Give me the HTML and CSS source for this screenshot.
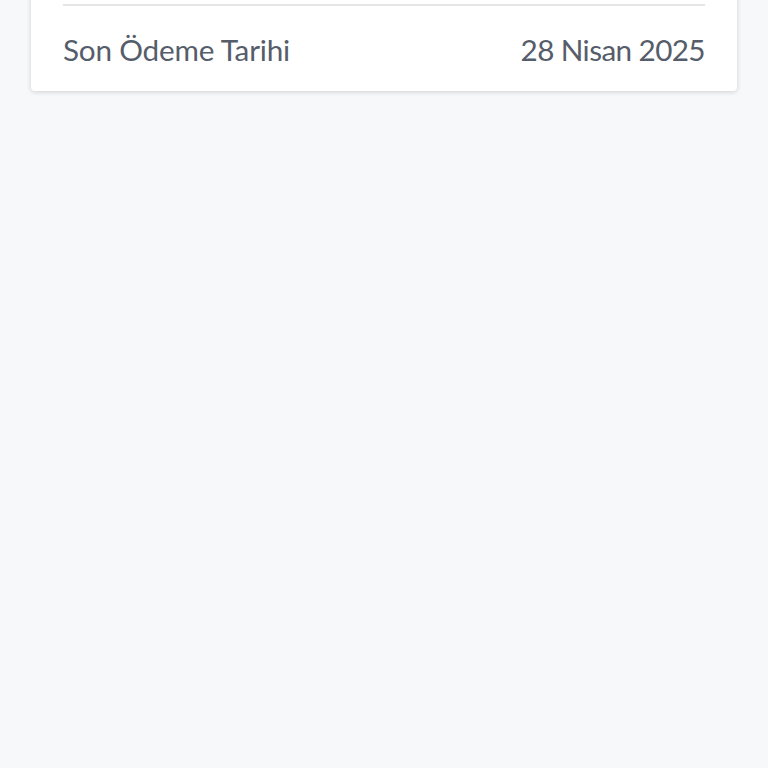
FILE: index.html
```html
<!DOCTYPE html>
<html lang="tr">
<head>
  <meta charset="UTF-8" />
  <meta name="viewport" content="width=device-width, initial-scale=1.0"/>
  <title>Fatura Detayı</title>
  <link rel="stylesheet" href="styles.css">
</head>
<body>

  <div class="card">
    <div class="row">
      <span class="label">Son Ödeme Tarihi</span>
      <span class="value">28 Nisan 2025</span>
    </div>
  </div>

</body>
</html>
```

FILE: styles.css
```css
* { box-sizing: border-box; margin: 0; padding: 0; }
body {
  font-family: 'Lato', 'Open Sans', sans-serif;
  background-color: #f7f8fa;
  color: #565d6a;
  height: 768px;
  overflow: hidden;
}
.card {
  margin: -40px 31px 0;
  padding: 44px 32px 0;
  background: #fff;
  border-radius: 4px;
  box-shadow: 0 1px 5px rgba(0,0,0,0.16);
}
.row {
  display: flex;
  justify-content: space-between;
  align-items: center;
  height: 87px;
  padding-top: 2px;
  font-size: 29.7px;
  letter-spacing: -0.2px;
  border-top: 2px solid #e4e5e7;
}
.value {
  letter-spacing: -0.6px;
}
```
